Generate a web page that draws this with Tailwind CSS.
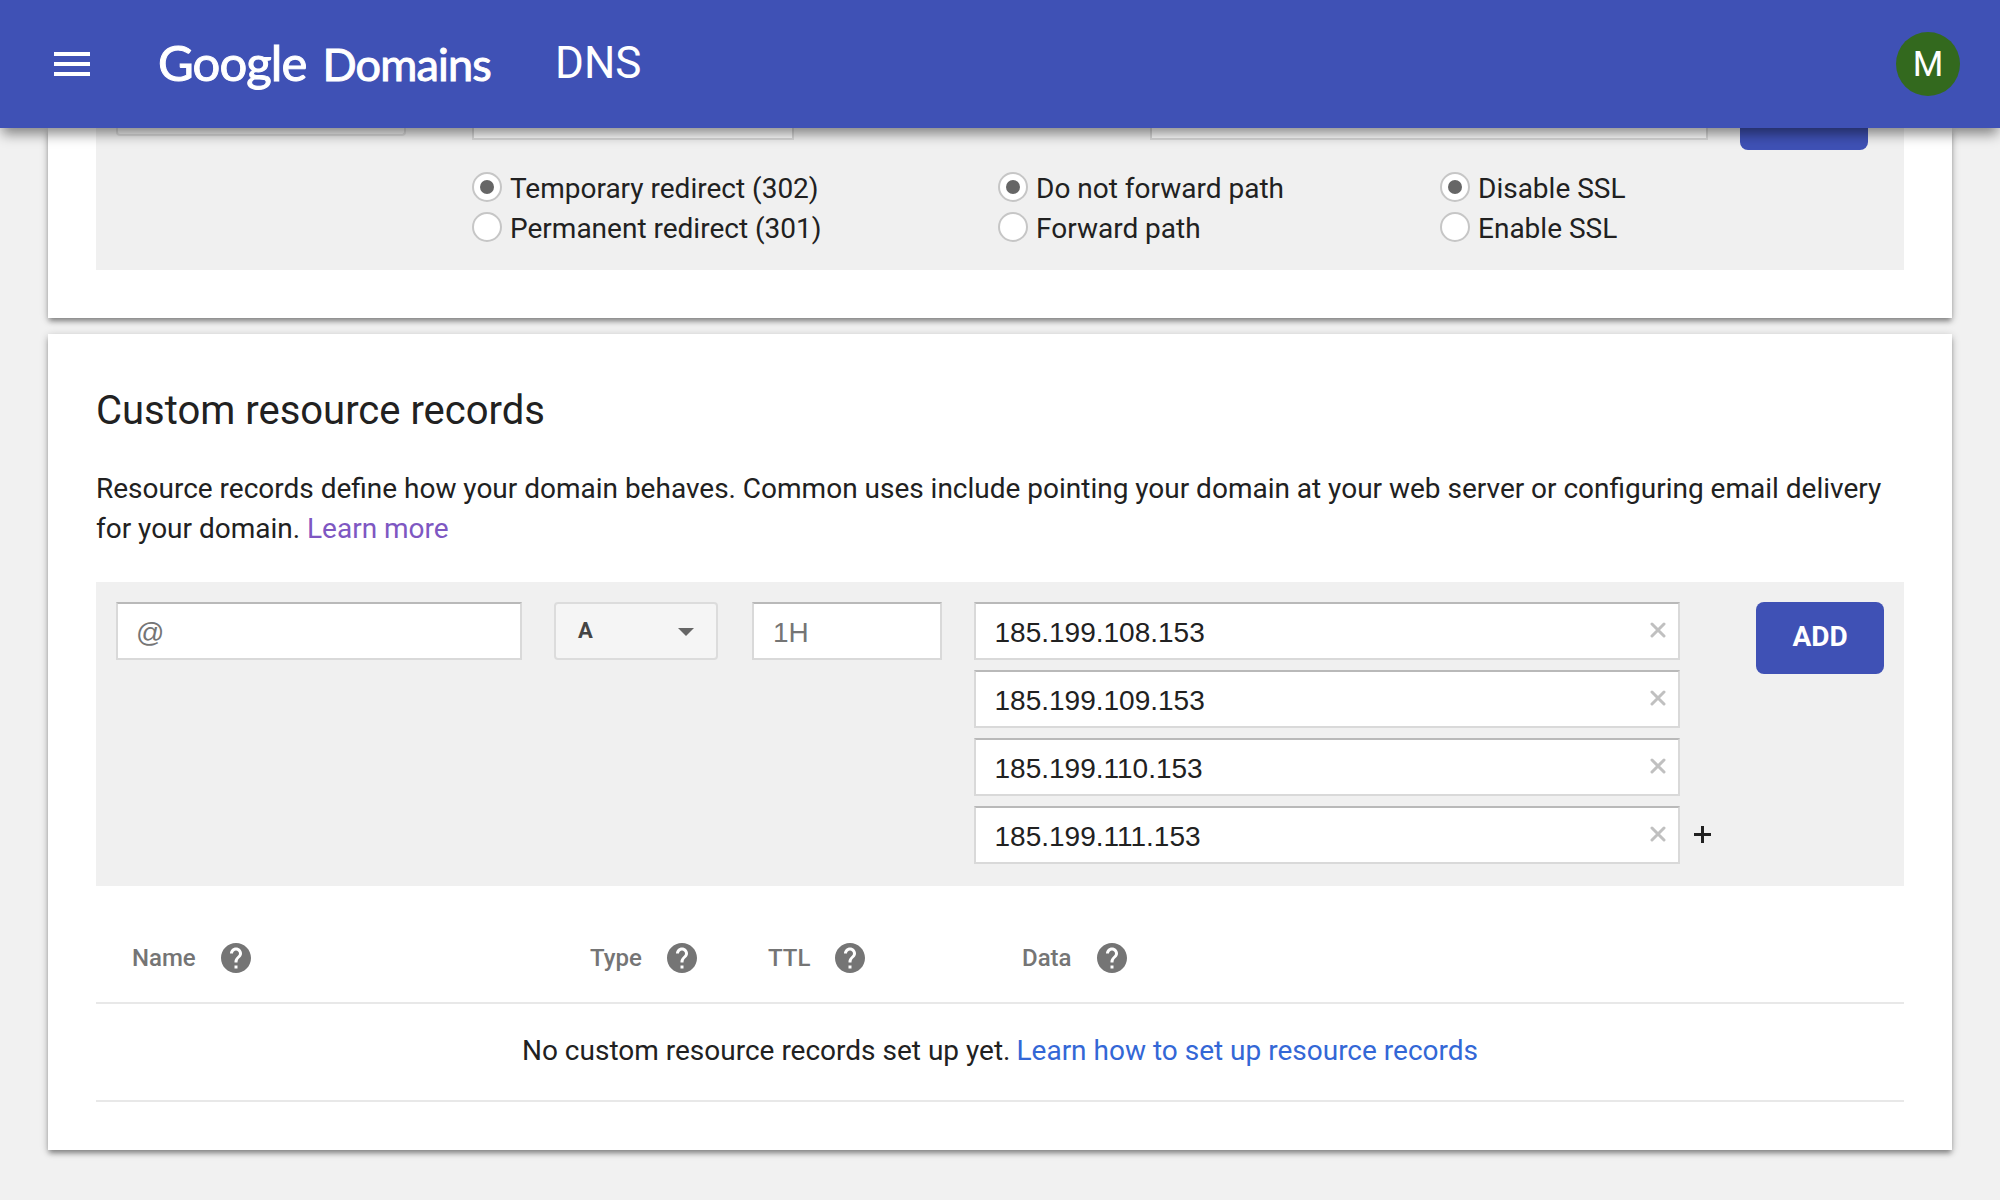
<!DOCTYPE html>
<html lang="en">
<head>
<meta charset="utf-8">
<title>Google Domains - DNS</title>
<script src="https://cdn.jsdelivr.net/npm/@tailwindcss/browser@4"></script>
</head>
<body class="w-[2000px] h-[1200px] overflow-hidden bg-[#f1f1f1] font-['Roboto',sans-serif] text-[28px] leading-[40px] text-[#212121] flex flex-col">
<svg class="hidden"><defs>
<symbol id="help" viewBox="2 2 20 20"><path fill="currentColor" d="M12 2C6.48 2 2 6.48 2 12s4.48 10 10 10 10-4.48 10-10S17.520 2 12 2zm1 17h-2v-2h2v2zm2.070-7.750l-.9.920C13.450 12.900 13 13.500 13 15h-2v-.5c0-1.100.45-2.100 1.170-2.830l1.240-1.260c.37-.36.59-.86.59-1.410 0-1.100-.9-2-2-2s-2 .9-2 2H8c0-2.210 1.790-4 4-4s4 1.790 4 4c0 .88-.36 1.680-.93 2.250z"/></symbol>
<symbol id="clear" viewBox="0 0 16 16"><path d="M2 2l12 12M14 2L2 14" stroke="currentColor" stroke-width="3" stroke-linecap="round" fill="none"/></symbol>
</defs></svg>

<header class="h-32 shrink-0 bg-[#3f51b5] text-white flex items-center relative z-10 shadow-[0_8px_12px_-2px_rgba(0,0,0,0.45)] pl-[54px] pr-10">
  <svg class="w-9 h-6 shrink-0" viewBox="0 0 36 24" fill="#fff"><path d="M0 0h36v4H0zM0 10h36v4H0zM0 20h36v4H0z"/></svg>
  <div class="ml-[68px] w-[333px] shrink-0 whitespace-nowrap font-['Lato',sans-serif] leading-[60px] flex items-baseline pb-0.5 [-webkit-text-stroke:1px_white]">
    <span class="text-[49px] w-[168px] -tracking-[0.9px]">Google</span><span class="text-[45px] -tracking-[0.8px]">Domains</span>
  </div>
  <h1 class="ml-[64px] text-[44px] leading-[60px] -mt-0.5">DNS</h1>
  <div class="ml-auto size-16 rounded-full bg-[#33691e] flex items-center justify-center text-[35px] pt-0.5">M</div>
</header>

<main class="px-12 flex flex-col gap-4">
  <section class="h-[190px] bg-white px-12 shadow-[0_2px_8px_rgba(0,0,0,0.22),0_4px_5px_-1px_rgba(0,0,0,0.35)]">
    <div class="h-[142px] bg-[#f0f0f0] pl-5 pr-9">
      <div class="flex items-start h-11">
        <div class="w-[290px] h-2 border-2 border-t-0 border-[#dcdcdc] bg-[#f5f5f5] rounded-b"></div>
        <div class="ml-[66px] w-[322px] h-3 border-2 border-t-0 border-[#d9d9d9] bg-white"></div>
        <div class="ml-[356px] w-[558px] h-3 border-2 border-t-0 border-[#d9d9d9] bg-white"></div>
        <div class="ml-8 w-32 h-[22px] rounded-b-lg bg-[#3f51b5]"></div>
      </div>
      <div class="grid grid-cols-[526px_442px_auto] pl-[356px]">
        <label class="flex h-10 gap-2"><span class="size-[30px] rounded-full border-2 border-[#c6c6c6] bg-white flex items-center justify-center"><i class="size-3.5 rounded-full bg-[#666]"></i></span><span class="-mt-[3px]">Temporary redirect (302)</span></label>
        <label class="flex h-10 gap-2"><span class="size-[30px] rounded-full border-2 border-[#c6c6c6] bg-white flex items-center justify-center"><i class="size-3.5 rounded-full bg-[#666]"></i></span><span class="-mt-[3px]">Do not forward path</span></label>
        <label class="flex h-10 gap-2"><span class="size-[30px] rounded-full border-2 border-[#c6c6c6] bg-white flex items-center justify-center"><i class="size-3.5 rounded-full bg-[#666]"></i></span><span class="-mt-[3px]">Disable SSL</span></label>
        <label class="flex h-10 gap-2"><span class="size-[30px] rounded-full border-2 border-[#c6c6c6] bg-white"></span><span class="-mt-[3px]">Permanent redirect (301)</span></label>
        <label class="flex h-10 gap-2"><span class="size-[30px] rounded-full border-2 border-[#c6c6c6] bg-white"></span><span class="-mt-[3px]">Forward path</span></label>
        <label class="flex h-10 gap-2"><span class="size-[30px] rounded-full border-2 border-[#c6c6c6] bg-white"></span><span class="-mt-[3px]">Enable SSL</span></label>
      </div>
    </div>
  </section>

  <section class="h-[816px] bg-white px-12 pt-[51px] shadow-[0_2px_8px_rgba(0,0,0,0.22),0_4px_5px_-1px_rgba(0,0,0,0.35)]">
    <h2 class="text-[40px] leading-[52px]">Custom resource records</h2>
    <p class="mt-8 h-20 whitespace-nowrap [word-spacing:-0.05px]">Resource records define how your domain behaves. Common uses include pointing your domain at your web server or configuring email delivery<br>for your domain. <a class="text-[#7e57c2]">Learn more</a></p>

    <div class="mt-[33px] h-[304px] bg-[#f0f0f0] p-5 flex items-start font-['Liberation_Sans',sans-serif]">
      <div class="w-[406px] h-[58px] border-2 border-[#d9d9d9] border-t-[#b9b9b9] bg-white px-[18px] pt-[3px] flex items-center text-[#757575]">@</div>
      <div class="ml-8 w-[164px] h-[58px] border-2 border-[#dcdcdc] rounded bg-[#f5f5f5] pl-[22px] pr-[22px] flex items-center justify-between font-['Roboto',sans-serif] text-[22px] font-bold text-[#444]">A<svg class="w-4 h-2 mt-0.5" viewBox="0 0 16 8"><path d="M0 0h16L8 8z" fill="#666"/></svg></div>
      <div class="ml-[34px] w-[190px] h-[58px] border-2 border-[#d9d9d9] border-t-[#b9b9b9] bg-white px-[19px] pt-[3px] flex items-center text-[#757575]">1H</div>
      <div class="ml-8 w-[706px] flex flex-col gap-2.5">
        <div class="h-[58px] border-2 border-[#d9d9d9] border-t-[#b9b9b9] bg-white pl-[18.5px] pr-3 flex items-center justify-between"><span class="pt-[3px]">185.199.108.153</span><svg class="size-4 mb-0.5 text-[#c0c0c0]"><use href="#clear"/></svg></div>
        <div class="h-[58px] border-2 border-[#d9d9d9] border-t-[#b9b9b9] bg-white pl-[18.5px] pr-3 flex items-center justify-between"><span class="pt-[3px]">185.199.109.153</span><svg class="size-4 mb-0.5 text-[#c0c0c0]"><use href="#clear"/></svg></div>
        <div class="h-[58px] border-2 border-[#d9d9d9] border-t-[#b9b9b9] bg-white pl-[18.5px] pr-3 flex items-center justify-between"><span class="pt-[3px]">185.199.110.153</span><svg class="size-4 mb-0.5 text-[#c0c0c0]"><use href="#clear"/></svg></div>
        <div class="h-[58px] border-2 border-[#d9d9d9] border-t-[#b9b9b9] bg-white pl-[18.5px] pr-3 flex items-center justify-between"><span class="pt-[3px]">185.199.111.153</span><svg class="size-4 mb-0.5 text-[#c0c0c0]"><use href="#clear"/></svg></div>
      </div>
      <svg class="ml-[13.5px] mt-[224px] size-[17px]" viewBox="0 0 17 17"><path d="M0 8.500h17M8.500 0v17" stroke="#212121" stroke-width="3"/></svg>
      <button class="ml-auto w-32 h-[72px] rounded-lg bg-[#3f51b5] text-white font-['Roboto',sans-serif] font-bold text-[28px] pb-0.5">ADD</button>
    </div>

    <div class="h-[118px] border-b-2 border-[#e8e8e8] pt-7 pl-9 grid grid-cols-[458px_178px_254px_auto] items-center text-[24px] font-medium text-[#757575]">
      <div class="flex items-center"><span class="w-[89px]">Name</span><svg class="size-[30px]"><use href="#help"/></svg></div>
      <div class="flex items-center"><span class="w-[77px]">Type</span><svg class="size-[30px]"><use href="#help"/></svg></div>
      <div class="flex items-center"><span class="w-[67px]">TTL</span><svg class="size-[30px]"><use href="#help"/></svg></div>
      <div class="flex items-center"><span class="w-[75px]">Data</span><svg class="size-[30px]"><use href="#help"/></svg></div>
    </div>
    <div class="h-[98px] border-b-2 border-[#e8e8e8] pb-0.5 flex items-center justify-center gap-[6px]"><span>No custom resource records set up yet.</span><a class="text-[#3367d6]">Learn how to set up resource records</a></div>
  </section>
</main>
</body>
</html>
